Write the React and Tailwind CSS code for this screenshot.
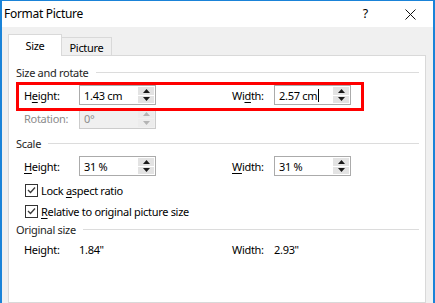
import React from 'react';

const font = { fontFamily: '"Noto Sans", "Open Sans", sans-serif' };

const Arrow = ({ up, disabled }) => (
  <svg width="7" height="4" viewBox="0 0 7 4">
    <polygon
      points={up ? '0,4 7,4 3.5,0' : '0,0 7,0 3.5,4'}
      fill={disabled ? '#b4b4b4' : '#1a1a1a'}
    />
  </svg>
);

const SpinBox = ({ value, disabled, caret }) => (
  <div
    className={`flex h-[20px] w-[77px] border ${
      disabled ? 'border-[#cccccc] bg-[#f0f0f0]' : 'border-[#ababab] bg-white'
    }`}
  >
    <div
      className={`flex flex-1 items-center pl-[4px] ${
        disabled ? 'text-[#8c8c8c]' : 'text-black'
      }`}
    >
      {value}
      {caret && <span className="ml-px inline-block h-[13px] w-px bg-black" />}
    </div>
    <div className="flex w-[17px] flex-col gap-px p-px pl-0">
      <div className={`flex flex-1 items-center justify-center ${disabled ? 'bg-[#ececec]' : 'bg-[#e3e3e3]'}`}>
        <Arrow up disabled={disabled} />
      </div>
      <div className={`flex flex-1 items-center justify-center ${disabled ? 'bg-[#ececec]' : 'bg-[#e3e3e3]'}`}>
        <Arrow disabled={disabled} />
      </div>
    </div>
  </div>
);

const Label = ({ pre = '', u, post, className = '' }) => (
  <span className={className}>
    {pre}
    <span className="underline underline-offset-2">{u}</span>
    {post}
  </span>
);

const GroupHeader = ({ title, className = '' }) => (
  <div className={`flex h-4 items-center gap-[7px] pr-[6px] pl-[7px] ${className}`}>
    <span className="text-[#1e1e1e]">{title}</span>
    <div className="h-px flex-1 bg-[#dcdcdc]" />
  </div>
);

const CheckRow = ({ children, className = '' }) => (
  <div className={`flex items-center pl-[16px] ${className}`}>
    <div className="flex h-[13px] w-[13px] items-center justify-center border border-[#333333] bg-white">
      <svg width="9" height="8" viewBox="0 0 9 8">
        <polyline points="1,4 3.5,6.5 8,1.5" fill="none" stroke="#3a3a3a" strokeWidth="1.3" />
      </svg>
    </div>
    <span className="ml-[3px]">{children}</span>
  </div>
);

export default function App() {
  return (
    <div
      className="flex h-[303px] w-[435px] flex-col overflow-hidden border-x-2 border-t border-[#1a83d8] text-[11px] leading-none tracking-[-0.3px] text-black"
      style={font}
    >
      {/* Title bar */}
      <div className="flex h-[26px] shrink-0 items-center bg-white pl-[2px]">
        <span className="flex-1 text-[12px]">Format Picture</span>
        <span className="mr-[37px] text-[12.5px]">?</span>
        <svg width="11" height="11" viewBox="0 0 11 11" className="mr-[17px]">
          <path d="M0.5 0.5 L10.5 10.5 M10.5 0.5 L0.5 10.5" stroke="#111" strokeWidth="1" />
        </svg>
      </div>

      {/* Body */}
      <div className="flex flex-1 flex-col bg-[#f0f0f0] pr-[7px] pl-[6px] pt-[7px]">
        {/* Tabs */}
        <div className="relative z-10 -mb-px flex items-end">
          <div className="flex h-[22px] w-[54px] items-center justify-center border-x border-t border-[#d9d9d9] bg-white">
            Size
          </div>
          <div className="flex h-[19px] w-[50px] items-center justify-center border-t border-r border-b border-[#d9d9d9] bg-[#f0f0f0] pt-px">
            Picture
          </div>
        </div>

        {/* Panel */}
        <div className="flex flex-1 flex-col border border-[#d9d9d9] bg-white pt-[8px]">
          <GroupHeader title="Size and rotate" />

          <div className="relative mt-[3px] flex h-[24px] items-center pl-[15px]">
            <div className="pointer-events-none absolute top-[-1px] left-[7px] h-[29px] w-[348px] border-[3px] border-[#ff0000]" />
            <Label pre="H" u="e" post="ight:" className="w-[55px]" />
            <SpinBox value="1.43 cm" />
            <Label pre="Wi" u="d" post="th:" className="ml-[76px] w-[42px]" />
            <SpinBox value="2.57 cm" caret />
          </div>

          <div className="flex h-[23px] items-center pl-[15px]">
            <span className="w-[55px] text-[#8c8c8c]">Rotation:</span>
            <SpinBox value="0°" disabled />
          </div>

          <GroupHeader title="Scale" className="mt-[5px]" />

          <div className="mt-[3px] flex h-[24px] items-center pl-[15px]">
            <Label u="H" post="eight:" className="w-[55px]" />
            <SpinBox value="31 %" />
            <Label u="W" post="idth:" className="ml-[76px] w-[42px]" />
            <SpinBox value="31 %" />
          </div>

          <CheckRow className="mt-px h-[22px]">
            Lock <Label u="a" post="spect ratio" />
          </CheckRow>
          <CheckRow className="h-[20px]">
            <Label u="R" post="elative to original picture size" />
          </CheckRow>

          <GroupHeader title="Original size" />

          <div className="mt-[2px] flex h-[20px] items-center pl-[15px]">
            <span className="w-[55px]">Height:</span>
            <span className="w-[153px]">1.84"</span>
            <span className="w-[42px]">Width:</span>
            <span>2.93"</span>
          </div>
        </div>
      </div>
    </div>
  );
}
